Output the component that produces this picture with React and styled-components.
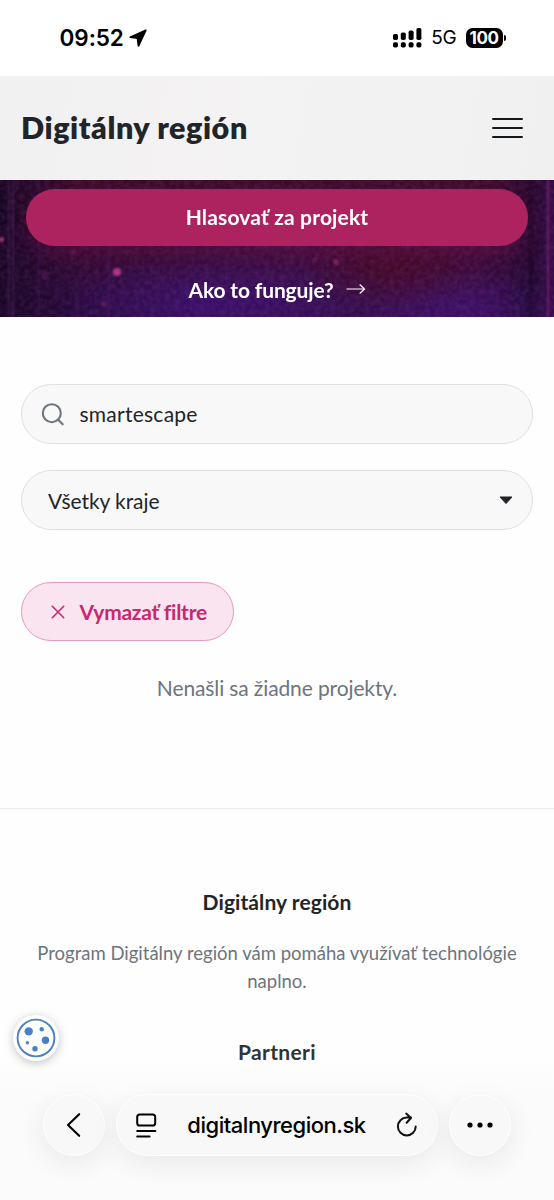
import React from "react";
import styled, { createGlobalStyle } from "styled-components";

const GlobalStyle = createGlobalStyle`
  *, *::before, *::after { box-sizing: border-box; }
  body {
    margin: 0;
    background: #fefefe;
    color: #212529;
    font-family: Lato, "Open Sans", sans-serif;
  }
  button, input { font: inherit; color: inherit; letter-spacing: inherit; }
`;

const Screen = styled.div`
  position: relative;
  width: 554px;
  height: 1200px;
  overflow: hidden;
  background: #fefefe;
`;

const Label = styled.span`
  font-size: ${(p) => p.$size || 21}px;
  font-weight: ${(p) => p.$weight || 400};
  letter-spacing: ${(p) => p.$track || 0}px;
  white-space: nowrap;
`;

const StatusBar = styled.div`
  display: flex;
  align-items: center;
  justify-content: space-between;
  height: 76px;
  padding: 0 48.5px 1px 59.5px;
  background: #fff;
  color: #000;
  font-family: Inter, sans-serif;
`;

const StatusGroup = styled.div`
  display: flex;
  align-items: center;
  gap: ${(p) => p.$gap}px;
`;

const Battery = styled.div`
  display: flex;
  align-items: center;
  gap: 1px;
  &::after {
    content: "";
    width: 2px;
    height: 6px;
    border-radius: 0 3px 3px 0;
    background: #000;
  }
`;

const BatteryLevel = styled.div`
  width: 37px;
  height: 20px;
  border-radius: 6.5px;
  background: #000;
  color: #fff;
  font-size: 17px;
  font-weight: 700;
  line-height: 20px;
  letter-spacing: -0.5px;
  text-align: center;
`;

const Header = styled.header`
  display: flex;
  align-items: center;
  justify-content: space-between;
  height: 104px;
  padding: 0 31px 0 21px;
  background: linear-gradient(100deg, #f1f1f2, #f4f2f3 40%, #f2f2f3 75%, #f1f0f1);
`;

const Brand = styled.h1`
  margin: 0 0 3px;
  font-size: 30.5px;
  font-weight: 800;
  line-height: 40px;
  letter-spacing: 0.55px;
  white-space: nowrap;
`;

const MenuButton = styled.button`
  display: flex;
  flex-direction: column;
  gap: 6.5px;
  padding: 0;
  border: 0;
  background: none;
`;

const MenuLine = styled.span`
  width: 31px;
  height: 2.5px;
  border-radius: 2px;
  background: #16191c;
`;

const Hero = styled.section`
  position: relative;
  display: flex;
  flex-direction: column;
  align-items: center;
  height: 137px;
  padding: 8.5px 26px 0;
  overflow: hidden;
  background: #2b0a3a;
  color: #fff;
`;

const HeroBackdrop = styled.svg`
  position: absolute;
  inset: 0;
`;

const VoteButton = styled.button`
  position: relative;
  width: 100%;
  height: 57.5px;
  padding: 0 0 2px;
  border: 0;
  border-radius: 29px;
  background: #ad235f;
  box-shadow: 0 8px 18px rgba(150, 25, 85, 0.22);
`;

const HowLink = styled.a`
  position: relative;
  display: flex;
  align-items: center;
  gap: 12px;
  margin-top: 27px;
  height: 32px;
`;

const Filters = styled.section`
  display: flex;
  flex-direction: column;
  align-items: flex-start;
  height: 491px;
  padding: 67px 21px 0;
`;

const Field = styled.div`
  display: flex;
  align-items: center;
  width: 100%;
  height: 60px;
  margin-bottom: 26px;
  padding: 0 ${(p) => p.$end || 20}px 0 ${(p) => p.$start}px;
  border: 1.3px solid #dee0e3;
  border-radius: 30px;
  background: #f8f8f9;
`;

const SearchInput = styled.input`
  flex: 1;
  min-width: 0;
  margin-left: 15.5px;
  padding: 0 0 1px;
  border: 0;
  outline: 0;
  background: none;
  font-size: 21px;
  letter-spacing: 0.25px;
`;

const Caret = styled.svg`
  margin-left: auto;
`;

const ClearButton = styled.button`
  display: flex;
  align-items: center;
  gap: 14.5px;
  width: 213px;
  height: 59px;
  margin-top: 26px;
  padding: 0 0 0 29px;
  border: 1.3px solid #e39bc1;
  border-radius: 30px;
  background: #f9e4ef;
  color: #c9276e;
`;

const Empty = styled.p`
  width: 100%;
  margin: 33px 0 0;
  color: #6c757d;
  line-height: 28px;
  text-align: center;
`;

const Footer = styled.footer`
  border-top: 1px solid #e9eaec;
  padding: 78px 30px 0;
  text-align: center;
`;

const FooterHeading = styled.h2`
  margin: 0;
  font-size: 21px;
  font-weight: 700;
  line-height: 30px;
  letter-spacing: ${(p) => p.$track}px;
  color: ${(p) => p.$color || "#212529"};
`;

const FooterText = styled.p`
  margin: 22px 0 42px;
  color: #6c757d;
  font-size: 18.5px;
  line-height: 28px;
  letter-spacing: 0;
`;

const CookieButton = styled.button`
  position: absolute;
  left: 13px;
  top: 1015px;
  display: grid;
  place-items: center;
  width: 46px;
  height: 46px;
  padding: 0;
  border: 0;
  border-radius: 50%;
  background: #fff;
  box-shadow: 0 2px 10px rgba(0, 0, 0, 0.24);
`;

const BrowserBar = styled.nav`
  position: absolute;
  left: 0;
  right: 0;
  bottom: 0;
  display: flex;
  justify-content: center;
  gap: 11px;
  height: 142px;
  padding-top: 36px;
  background: linear-gradient(rgba(251, 251, 251, 0), rgba(250, 250, 250, 0.96) 35%, #fbfbfb);
  color: #000;
  font-family: Inter, sans-serif;
`;

const Glass = styled.div`
  display: flex;
  align-items: center;
  justify-content: ${(p) => (p.$wide ? "space-between" : "center")};
  width: ${(p) => (p.$wide ? 322 : 62)}px;
  height: 62px;
  padding: ${(p) => (p.$wide ? "0 18.5px 0 18.5px" : "0")};
  border: 1.5px solid #fff;
  border-radius: 31px;
  background: #f8f8f8;
  box-shadow: 0 8px 28px rgba(0, 0, 0, 0.07);
`;

const SIGNAL = [
  { x: 0, y: 6, h: 6 },
  { x: 7.8, y: 4.5, h: 7.5 },
  { x: 15.6, y: 2.5, h: 9.5 },
  { x: 23.4, y: 0, h: 12 },
];

const STREAKS = [
  { x: 8, w: 1.5, c: "#713c89", o: 0.35 },
  { x: 12.5, w: 1.5, c: "#713c89", o: 0.4 },
  { x: 38, w: 1.5, c: "#66357e", o: 0.28 },
  { x: 108, w: 1.5, c: "#66357e", o: 0.25 },
  { x: 529, w: 4, c: "#14031a", o: 0.35 },
  { x: 547, w: 2, c: "#a02b91", o: 0.5 },
];

const SPARKS = [
  { x: 117, y: 92, r: 4, o: 0.85 },
  { x: 1.5, y: 59.5, r: 2.6, o: 0.75 },
  { x: 45, y: 96, r: 4, o: 0.15 },
  { x: 74, y: 72, r: 3, o: 0.2 },
  { x: 104, y: 124, r: 3, o: 0.25 },
  { x: 336, y: 82, r: 3, o: 0.4 },
  { x: 315, y: 80, r: 2.5, o: 0.2 },
];

function Backdrop() {
  return (
    <HeroBackdrop width="554" height="137" viewBox="0 0 554 137" aria-hidden="true">
      <defs>
        <linearGradient id="base" x1="0" x2="1">
          <stop offset="0" stopColor="#180622" />
          <stop offset="0.2" stopColor="#260a38" />
          <stop offset="0.5" stopColor="#310e49" />
          <stop offset="0.85" stopColor="#360c42" />
          <stop offset="0.96" stopColor="#1e0830" />
          <stop offset="1" stopColor="#360b45" />
        </linearGradient>
        <linearGradient id="warm" x1="0" y1="0" x2="0" y2="1">
          <stop offset="0" stopColor="#3f0a22" stopOpacity="0.85" />
          <stop offset="0.6" stopColor="#430a2c" stopOpacity="0.45" />
          <stop offset="1" stopColor="#33106a" stopOpacity="0.15" />
        </linearGradient>
        <linearGradient id="warmEdges" x1="0" x2="1">
          <stop offset="0" stopColor="#fff" stopOpacity="0" />
          <stop offset="0.14" stopColor="#fff" />
          <stop offset="0.88" stopColor="#fff" />
          <stop offset="1" stopColor="#fff" stopOpacity="0" />
        </linearGradient>
        <mask id="warmMask"><rect width="554" height="137" fill="url(#warmEdges)" /></mask>
        <radialGradient id="violet">
          <stop offset="0" stopColor="#421181" stopOpacity="0.55" />
          <stop offset="1" stopColor="#421181" stopOpacity="0" />
        </radialGradient>
        <radialGradient id="wine">
          <stop offset="0" stopColor="#460820" stopOpacity="0.75" />
          <stop offset="1" stopColor="#460820" stopOpacity="0" />
        </radialGradient>
        <filter id="grain" x="0" y="0" width="100%" height="100%">
          <feTurbulence type="fractalNoise" baseFrequency="0.2" numOctaves="2" seed="4" />
          <feColorMatrix values="0 0 0 0 0.45  0 0 0 0 0.12  0 0 0 0 0.55  0.9 0 0 0 -0.25" />
        </filter>
        <filter id="soft"><feGaussianBlur stdDeviation="0.9" /></filter>
      </defs>
      <rect width="554" height="137" fill="url(#base)" />
      <rect width="554" height="137" fill="url(#warm)" mask="url(#warmMask)" />
      <ellipse cx="210" cy="125" rx="150" ry="52" fill="url(#violet)" />
      <ellipse cx="465" cy="137" rx="105" ry="48" fill="url(#violet)" />
      <ellipse cx="390" cy="88" rx="90" ry="42" fill="url(#wine)" />
      <rect width="554" height="137" filter="url(#grain)" opacity="0.28" />
      <g filter="url(#soft)">
        {STREAKS.map((s) => (
          <rect key={s.x} x={s.x} width={s.w} height="137" fill={s.c} opacity={s.o} />
        ))}
        {SPARKS.map((s) => (
          <circle key={s.x} cx={s.x} cy={s.y} r={s.r} fill="#c83d97" opacity={s.o} />
        ))}
      </g>
    </HeroBackdrop>
  );
}

export default function App() {
  return (
    <Screen>
      <GlobalStyle />
      <StatusBar>
        <StatusGroup $gap={5}>
          <Label $size={22.5} $weight={600} $track={-0.05}>09:52</Label>
          <svg width="18" height="18" viewBox="0 0 18 18" aria-hidden="true">
            <path d="M16.8 1.2 1.3 8.2 8.5 9.2 9.5 16.8Z" fill="#000" stroke="#000" strokeWidth="1.8" strokeLinejoin="round" />
          </svg>
        </StatusGroup>
        <StatusGroup $gap={9}>
          <svg width="29" height="20" viewBox="0 0 29 20" aria-hidden="true">
            {SIGNAL.map((b) => (
              <g key={b.x}>
                <rect x={b.x} y={b.y} width="5" height={b.h} rx="1.7" />
                <rect x={b.x} y="14.3" width="5" height="5.2" rx="1.7" />
              </g>
            ))}
          </svg>
          <Label $size={19} $weight={400} $track={-0.3}>5G</Label>
          <Battery><BatteryLevel>100</BatteryLevel></Battery>
        </StatusGroup>
      </StatusBar>

      <Header>
        <Brand>Digitálny región</Brand>
        <MenuButton aria-label="Menu">
          <MenuLine /><MenuLine /><MenuLine />
        </MenuButton>
      </Header>

      <Hero>
        <Backdrop />
        <VoteButton><Label $weight={700} $track={0.16}>Hlasovať za projekt</Label></VoteButton>
        <HowLink>
          <Label $weight={700} $track={-0.14}>Ako to funguje?</Label>
          <svg width="20" height="12" viewBox="0 0 20 12" fill="none" stroke="#fff" strokeWidth="1.2" strokeLinecap="round" strokeLinejoin="round" aria-hidden="true">
            <path d="M1 6h17.5M14 1.8 18.5 6 14 10.2" />
          </svg>
        </HowLink>
      </Hero>

      <Filters>
        <Field $start={19}>
          <svg width="23" height="23" viewBox="0 0 23 23" fill="none" stroke="#6c757d" strokeWidth="2.1" strokeLinecap="round" aria-hidden="true">
            <circle cx="10.8" cy="10.2" r="9" />
            <path d="m17 16.6 4.7 4.7" />
          </svg>
          <SearchInput defaultValue="smartescape" />
        </Field>
        <Field $start={26} $end={19}>
          <Label $track={-0.06}>Všetky kraje</Label>
          <Caret width="14" height="9" viewBox="0 0 14 9" aria-hidden="true">
            <path d="M1 1h12L7 7.6Z" fill="#212529" stroke="#212529" strokeLinejoin="round" />
          </Caret>
        </Field>
        <ClearButton>
          <svg width="14" height="14" viewBox="0 0 14 14" stroke="#c9276e" strokeWidth="1.6" strokeLinecap="round" aria-hidden="true">
            <path d="m1.3 1.3 11.4 11.4M12.7 1.3 1.3 12.7" />
          </svg>
          <Label $weight={700} $track={-0.27}>Vymazať filtre</Label>
        </ClearButton>
        <Empty><Label $track={-0.12}>Nenašli sa žiadne projekty.</Label></Empty>
      </Filters>

      <Footer>
        <FooterHeading $track={0.08}>Digitálny región</FooterHeading>
        <FooterText>
          Program Digitálny región vám pomáha využívať technológie<br />naplno.
        </FooterText>
        <FooterHeading $track={0.35} $color="#303336">Partneri</FooterHeading>
      </Footer>

      <BrowserBar>
        <Glass>
          <svg width="16" height="26" viewBox="0 0 16 26" fill="none" stroke="#000" strokeWidth="2.1" strokeLinecap="round" strokeLinejoin="round" aria-hidden="true">
            <path d="M13.2 2.2 2 13 13.2 23.8" />
          </svg>
        </Glass>
        <Glass $wide>
          <svg width="21" height="25" viewBox="0 0 21 25" fill="none" stroke="#000" strokeWidth="2" strokeLinecap="round" aria-hidden="true">
            <rect x="1.2" y="1.5" width="18" height="11" rx="2.6" />
            <path d="M1.2 18h18.2M1.2 23.5h12.4" />
          </svg>
          <Label $size={22} $weight={500} $track={-0.48}>digitalnyregion.sk</Label>
          <svg width="22" height="26" viewBox="0 0 22 26" fill="none" stroke="#111" strokeWidth="2" strokeLinecap="round" strokeLinejoin="round" aria-hidden="true">
            <path d="M19.7 14.5A8.9 8.9 0 1 1 10.8 5.6H15M10.2 1.6 15 6 10.6 10.8" />
          </svg>
        </Glass>
        <Glass>
          <svg width="28" height="8" viewBox="0 0 28 8" aria-hidden="true">
            <circle cx="4" cy="4" r="2.6" /><circle cx="14" cy="4" r="2.6" /><circle cx="24" cy="4" r="2.6" />
          </svg>
        </Glass>
      </BrowserBar>
      <CookieButton aria-label="Cookies">
        <svg width="40" height="40" viewBox="0 0 40 40" fill="#4a80c4" aria-hidden="true">
          <circle cx="20" cy="20" r="18.4" fill="none" stroke="#4a80c4" strokeWidth="1.9" />
          <circle cx="12.7" cy="13.4" r="4.2" />
          <circle cx="25.7" cy="11.2" r="2.2" />
          <circle cx="29.5" cy="22.3" r="3.7" />
          <circle cx="11.4" cy="24.7" r="1.7" />
          <circle cx="19" cy="30.7" r="2.7" />
        </svg>
      </CookieButton>
    </Screen>
  );
}
